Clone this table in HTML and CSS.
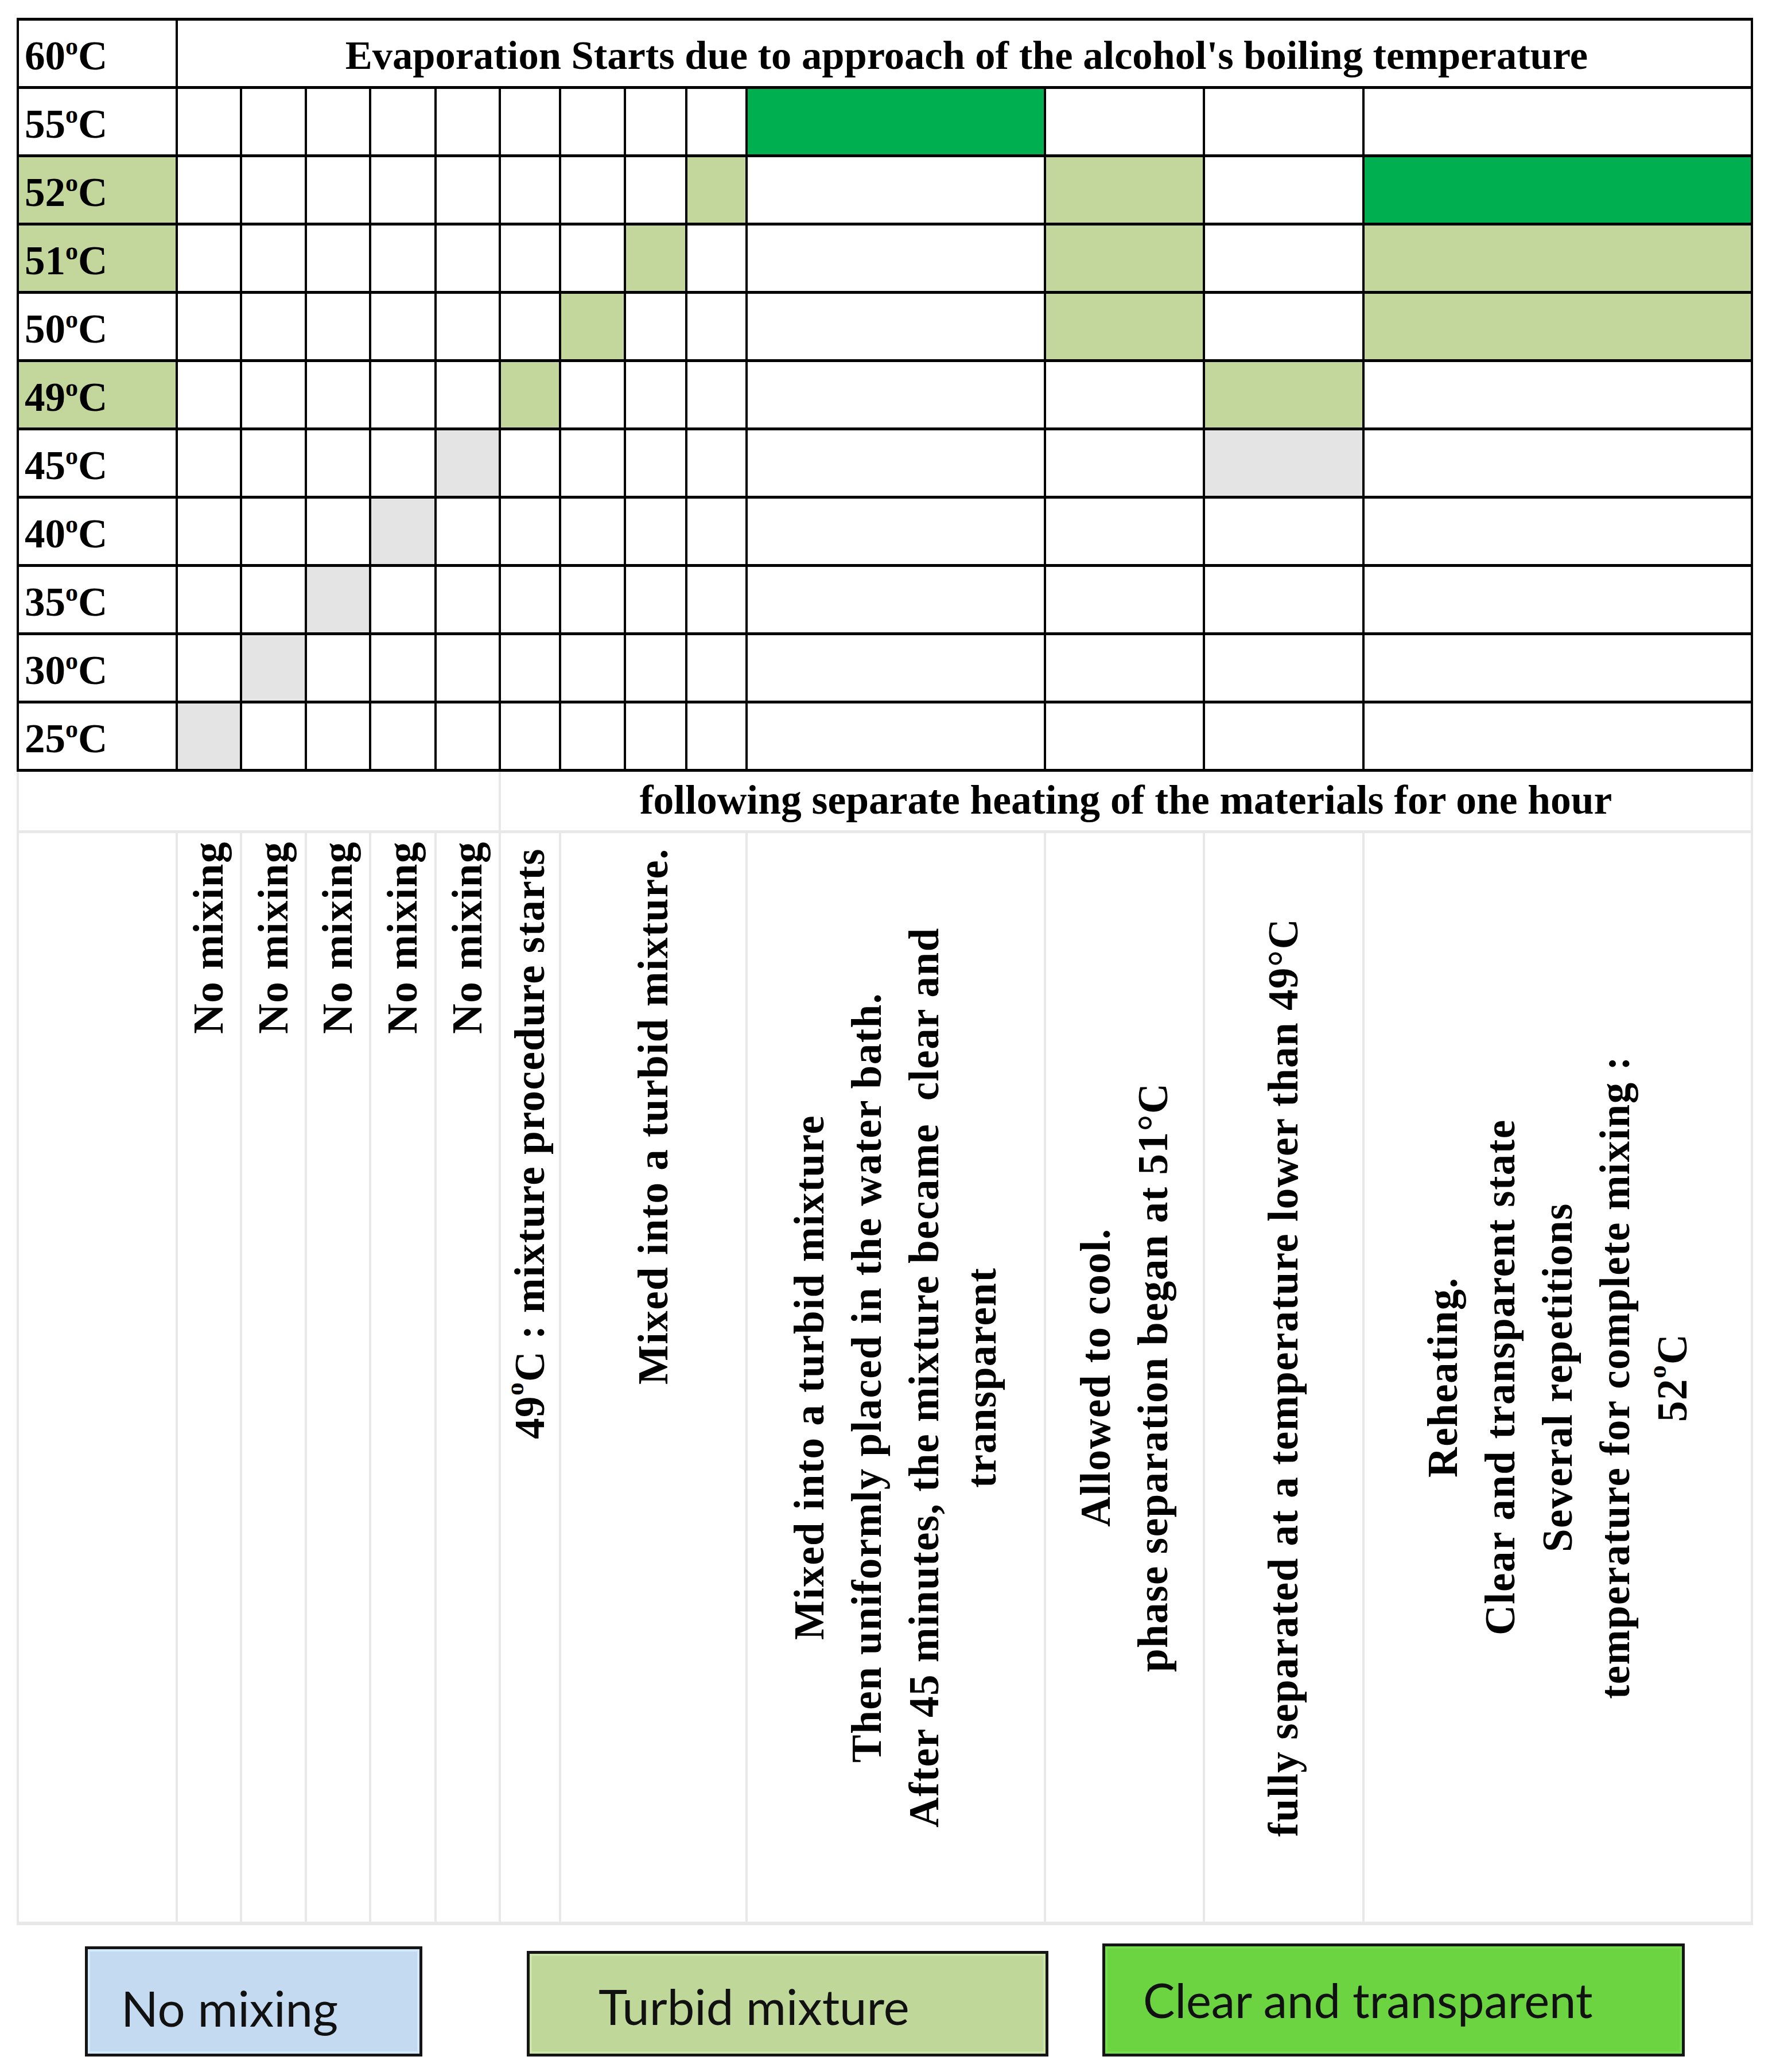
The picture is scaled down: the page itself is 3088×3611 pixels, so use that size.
FILE: index.html
```html
<!DOCTYPE html>
<html lang="en">
<head>
<meta charset="utf-8">
<title>Mixing temperature chart</title>
<link rel="stylesheet" href="styles.css">
</head>
<body>
<div class="chart">
  <div class="lbl"><span>60<sup class="deg">o</sup>C</span></div>
  <div class="head">Evaporation Starts due to approach of the alcohol's boiling temperature</div>

  <div class="lbl"><span>55<sup class="deg">o</sup>C</span></div>
  <div class="c"></div><div class="c"></div><div class="c"></div><div class="c"></div><div class="c"></div><div class="c"></div><div class="c"></div><div class="c"></div><div class="c"></div><div class="c dg"></div><div class="c"></div><div class="c"></div><div class="c"></div>

  <div class="lbl lg"><span>52<sup class="deg">o</sup>C</span></div>
  <div class="c"></div><div class="c"></div><div class="c"></div><div class="c"></div><div class="c"></div><div class="c"></div><div class="c"></div><div class="c"></div><div class="c lg"></div><div class="c"></div><div class="c lg"></div><div class="c"></div><div class="c dg"></div>

  <div class="lbl lg"><span>51<sup class="deg">o</sup>C</span></div>
  <div class="c"></div><div class="c"></div><div class="c"></div><div class="c"></div><div class="c"></div><div class="c"></div><div class="c"></div><div class="c lg"></div><div class="c"></div><div class="c"></div><div class="c lg"></div><div class="c"></div><div class="c lg"></div>

  <div class="lbl"><span>50<sup class="deg">o</sup>C</span></div>
  <div class="c"></div><div class="c"></div><div class="c"></div><div class="c"></div><div class="c"></div><div class="c"></div><div class="c lg"></div><div class="c"></div><div class="c"></div><div class="c"></div><div class="c lg"></div><div class="c"></div><div class="c lg"></div>

  <div class="lbl lg"><span>49<sup class="deg">o</sup>C</span></div>
  <div class="c"></div><div class="c"></div><div class="c"></div><div class="c"></div><div class="c"></div><div class="c lg"></div><div class="c"></div><div class="c"></div><div class="c"></div><div class="c"></div><div class="c"></div><div class="c lg"></div><div class="c"></div>

  <div class="lbl"><span>45<sup class="deg">o</sup>C</span></div>
  <div class="c"></div><div class="c"></div><div class="c"></div><div class="c"></div><div class="c gy"></div><div class="c"></div><div class="c"></div><div class="c"></div><div class="c"></div><div class="c"></div><div class="c"></div><div class="c gy"></div><div class="c"></div>

  <div class="lbl"><span>40<sup class="deg">o</sup>C</span></div>
  <div class="c"></div><div class="c"></div><div class="c"></div><div class="c gy"></div><div class="c"></div><div class="c"></div><div class="c"></div><div class="c"></div><div class="c"></div><div class="c"></div><div class="c"></div><div class="c"></div><div class="c"></div>

  <div class="lbl"><span>35<sup class="deg">o</sup>C</span></div>
  <div class="c"></div><div class="c"></div><div class="c gy"></div><div class="c"></div><div class="c"></div><div class="c"></div><div class="c"></div><div class="c"></div><div class="c"></div><div class="c"></div><div class="c"></div><div class="c"></div><div class="c"></div>

  <div class="lbl"><span>30<sup class="deg">o</sup>C</span></div>
  <div class="c"></div><div class="c gy"></div><div class="c"></div><div class="c"></div><div class="c"></div><div class="c"></div><div class="c"></div><div class="c"></div><div class="c"></div><div class="c"></div><div class="c"></div><div class="c"></div><div class="c"></div>

  <div class="lbl"><span>25<sup class="deg">o</sup>C</span></div>
  <div class="c gy"></div><div class="c"></div><div class="c"></div><div class="c"></div><div class="c"></div><div class="c"></div><div class="c"></div><div class="c"></div><div class="c"></div><div class="c"></div><div class="c"></div><div class="c"></div><div class="c"></div>
</div>

<div class="notes">
  <div class="n-blank"></div>
  <div class="n-follow">following separate heating of the materials for one hour</div>

  <div class="v"></div>
  <div class="v v-top"><div class="vt">No mixing</div></div>
  <div class="v v-top"><div class="vt">No mixing</div></div>
  <div class="v v-top"><div class="vt">No mixing</div></div>
  <div class="v v-top"><div class="vt">No mixing</div></div>
  <div class="v v-top"><div class="vt">No mixing</div></div>
  <div class="v v-top v-top2"><div class="vt">49<sup class="deg">o</sup>C : mixture procedure starts</div></div>
  <div class="v v-top v-top2 v-span3"><div class="vt">Mixed into a turbid mixture.</div></div>
  <div class="v v-mid"><div class="vt">Mixed into a turbid mixture<br>Then uniformly placed in the water bath.<br>After 45 minutes, the mixture became&nbsp; clear and<br>transparent</div></div>
  <div class="v v-mid"><div class="vt">Allowed to cool.<br>phase separation began at 51°C</div></div>
  <div class="v v-mid"><div class="vt">fully separated at a temperature lower than 49°C</div></div>
  <div class="v v-mid"><div class="vt">Reheating.<br>Clear and transparent state<br>Several repetitions<br>temperature for complete mixing :<br>52<sup class="deg">o</sup>C</div></div>
</div>

<div class="legend">
  <div class="key key-none">No mixing</div>
  <div class="key key-turbid">Turbid mixture</div>
  <div class="key key-clear">Clear and transparent</div>
</div>
</body>
</html>
```

FILE: styles.css
```css
* { box-sizing: border-box; }

html, body {
  margin: 0;
  padding: 0;
  background: #ffffff;
}

body {
  width: 3088px;
  height: 3611px;
  font-family: "Liberation Serif", "Times New Roman", serif;
  font-weight: 700;
  color: #000000;
  overflow: hidden;
}

/* ---------- temperature grid ---------- */
.chart {
  margin: 31px 0 0 29px;
  width: 3026px;
  display: grid;
  grid-template-columns: 273px 108px 109px 108px 110px 108px 101px 109px 103px 101px 516px 273px 274px 673px;
  grid-template-rows: repeat(11, 114px);
  gap: 5px 4px;
  padding: 5px 4px;
  background: #000000;
}

.c { background: #ffffff; }

.lbl {
  background: #ffffff;
  display: flex;
  align-items: center;
  padding: 8px 0 0 10px;
  font-size: 71px;
  line-height: 1;
}

.head {
  grid-column: 2 / span 13;
  background: #ffffff;
  display: flex;
  align-items: center;
  justify-content: center;
  padding: 6px 0 0 8px;
  font-size: 70.5px;
  line-height: 1;
}

.lg { background: #c3d69b; }
.dg { background: #00b050; }
.gy { background: #e4e4e4; }

.deg {
  font-size: 0.62em;
  vertical-align: 0.6em;
  line-height: 0;
}

/* ---------- notes area ---------- */
.notes {
  margin-left: 29px;
  width: 3026px;
  display: grid;
  grid-template-columns: 273px 108px 109px 108px 110px 108px 101px 109px 103px 101px 516px 273px 274px 673px;
  grid-template-rows: 102px 1897px;
  gap: 5px 4px;
  padding: 0 4px 6px 4px;
  background: #e8e8e8;
}

.n-blank {
  grid-column: 1 / span 6;
  background: #ffffff;
}

.n-follow {
  grid-column: 7 / span 8;
  background: #ffffff;
  display: flex;
  align-items: center;
  justify-content: center;
  font-size: 71.5px;
  line-height: 1;
  padding-bottom: 4px;
}

.v {
  background: #ffffff;
  display: flex;
  justify-content: center;
}

.v-span3 { grid-column: span 3; }

.vt {
  writing-mode: vertical-rl;
  transform: rotate(180deg);
  font-size: 73px;
  letter-spacing: 1.5px;
  line-height: 100px;
  white-space: nowrap;
}

.v-top .vt {
  text-align: end;
  padding-bottom: 14px;
}

.v-top2 .vt { padding-bottom: 26px; }

.v-mid .vt { text-align: center; }

/* ---------- legend ---------- */
.legend {
  display: flex;
  align-items: flex-end;
  height: 229px;
  font-weight: 400;
}

.key {
  display: flex;
  align-items: center;
  border: 5px solid #151515;
  font-family: "Lato", "Noto Sans", sans-serif;
  font-size: 85px;
  color: #111111;
  line-height: 1;
}

.key-none {
  margin-left: 148px;
  width: 588px;
  height: 192px;
  padding: 22px 0 0 58px;
  background: #c3daf0;
  box-shadow: inset 0 0 0 4px #d4e9fb;
}

.key-turbid {
  margin-left: 182px;
  width: 909px;
  height: 184px;
  padding: 8px 0 0 120px;
  background: #bfd89a;
  box-shadow: inset 0 0 0 4px #cde4a9;
}

.key-clear {
  margin-left: 94px;
  width: 1015px;
  height: 197px;
  padding: 0 0 0 66px;
  font-size: 83px;
  background: #6bd440;
  box-shadow: inset 0 0 0 4px #76dc4c;
}
```
